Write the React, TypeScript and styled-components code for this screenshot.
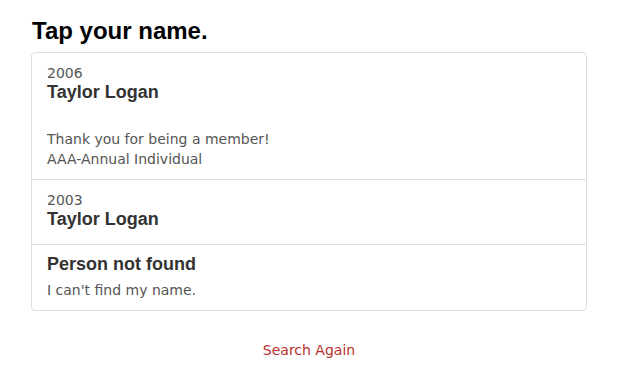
import React from "react"
import styled, { createGlobalStyle } from "styled-components"

type Member = {
    year?: string
    name: string
    lines?: string[]
}

const members: Member[] = [
    { year: "2006", name: "Taylor Logan", lines: ["Thank you for being a member!", "AAA-Annual Individual"] },
    { year: "2003", name: "Taylor Logan" },
]

const GlobalStyle = createGlobalStyle`
    body {
        margin: 0;
        background: #fff;
        font-family: "DejaVu Sans", Verdana, sans-serif;
        font-size: 14px;
        line-height: 20px;
        color: #555;
    }
`

export default function App() {
    return (
        <>
            <GlobalStyle />
            <Page>
                <Container>
                    <Title>Tap your name.</Title>
                    <List>
                        {members.map((m, i) => (
                            <Item key={i}>
                                {m.year && <Year>{m.year}</Year>}
                                <Name>{m.name}</Name>
                                {m.lines && (
                                    <Message>
                                        {m.lines.map((l) => (
                                            <Line key={l}>{l}</Line>
                                        ))}
                                    </Message>
                                )}
                            </Item>
                        ))}
                        <Item>
                            <Name>Person not found</Name>
                            <Text>I can't find my name.</Text>
                        </Item>
                    </List>
                    <Footer>
                        <Link href="#">Search Again</Link>
                    </Footer>
                </Container>
            </Page>
        </>
    )
}

const Page = styled.div`
    padding: 18px 0 0 31px;
`
const Container = styled.div`
    width: 556px;
`
const Title = styled.h3`
    margin: 0 0 8px 1px;
    font-family: "Liberation Sans", Arial, sans-serif;
    font-size: 24px;
    line-height: 1.1;
    font-weight: bold;
    color: #000;
`
const List = styled.div`
    border: 1px solid #ddd;
    border-radius: 4px;
`
const Item = styled.div`
    padding: 10px 15px;
    & + & {
        border-top: 1px solid #ddd;
    }
`
const Year = styled.div`
    color: #555;
`
const Name = styled.h4`
    margin: 0 0 5px;
    font-family: "Liberation Sans", Arial, sans-serif;
    font-size: 18px;
    line-height: 1.1;
    font-weight: bold;
    color: #333;
`
const Message = styled.div`
    margin-top: 25.5px;
`
const Line = styled.div`
    line-height: 20px;
`
const Text = styled.p`
    margin: 0;
`
const Footer = styled.div`
    margin-top: 29px;
    text-align: center;
`
const Link = styled.a`
    color: #b5302c;
    text-decoration: none;
`
